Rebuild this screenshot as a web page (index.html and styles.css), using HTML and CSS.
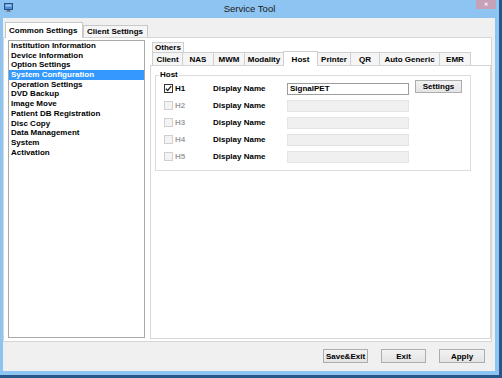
FILE: index.html
```html
<!DOCTYPE html>
<html lang="en">
<head>
    <meta charset="UTF-8">
    <title>Service Tool</title>
    <link rel="stylesheet" href="styles.css">
</head>
<body>
    <div class="window">
        <div class="titlebar">
            <svg class="app-icon" width="9" height="9" viewBox="0 0 9 9">
                <rect x="0.5" y="0.5" width="8" height="6" fill="#4f8fd8" stroke="#2b4f80"/>
                <rect x="1.5" y="1.5" width="6" height="2" fill="#9cc8f2"/>
                <rect x="3" y="7" width="3" height="1" fill="#5a6b80"/>
                <rect x="2" y="8" width="5" height="1" fill="#7b8a9c"/>
            </svg>
            <div class="title">Service Tool</div>
            <div class="close">&#x2715;</div>
        </div>

        <div class="client">
            <div class="main-tabs">
                <div class="main-tab active">Common Settings</div>
                <div class="main-tab">Client Settings</div>
            </div>

            <div class="main-page">
                <ul class="menu">
                    <li>Institution Information</li>
                    <li>Device Information</li>
                    <li>Option Settings</li>
                    <li class="selected">System Configuration</li>
                    <li>Operation Settings</li>
                    <li>DVD Backup</li>
                    <li>Image Move</li>
                    <li>Patient DB Registration</li>
                    <li>Disc Copy</li>
                    <li>Data Management</li>
                    <li>System</li>
                    <li>Activation</li>
                </ul>

                <div class="sub">
                    <div class="sub-tabs top-row">
                        <div class="sub-tab t-others">Others</div>
                    </div>
                    <div class="sub-tabs">
                        <div class="sub-tab t-client">Client</div>
                        <div class="sub-tab t-nas">NAS</div>
                        <div class="sub-tab t-mwm">MWM</div>
                        <div class="sub-tab t-modality">Modality</div>
                        <div class="sub-tab t-host active">Host</div>
                        <div class="sub-tab t-printer">Printer</div>
                        <div class="sub-tab t-qr">QR</div>
                        <div class="sub-tab t-auto">Auto Generic</div>
                        <div class="sub-tab t-emr">EMR</div>
                    </div>

                    <div class="sub-page">
                        <fieldset class="group">
                            <legend>Host</legend>

                            <div class="host-row">
                                <span class="check checked">
                                    <svg width="7" height="7" viewBox="0 0 7 7"><path d="M0.8 3.6 L2.7 5.5 L6.2 1.2" fill="none" stroke="#222" stroke-width="1.3"/></svg>
                                </span>
                                <span class="hlabel">H1</span>
                                <span class="dname">Display Name</span>
                                <span class="field">SignalPET</span>
                                <button class="btn settings-btn">Settings</button>
                            </div>
                            <div class="host-row off">
                                <span class="check"></span>
                                <span class="hlabel">H2</span>
                                <span class="dname">Display Name</span>
                                <span class="field"></span>
                            </div>
                            <div class="host-row off">
                                <span class="check"></span>
                                <span class="hlabel">H3</span>
                                <span class="dname">Display Name</span>
                                <span class="field"></span>
                            </div>
                            <div class="host-row off">
                                <span class="check"></span>
                                <span class="hlabel">H4</span>
                                <span class="dname">Display Name</span>
                                <span class="field"></span>
                            </div>
                            <div class="host-row off">
                                <span class="check"></span>
                                <span class="hlabel">H5</span>
                                <span class="dname">Display Name</span>
                                <span class="field"></span>
                            </div>
                        </fieldset>
                    </div>
                </div>
            </div>

            <div class="actions">
                <button class="btn">Save&amp;Exit</button>
                <button class="btn">Exit</button>
                <button class="btn apply-btn">Apply</button>
            </div>
        </div>
    </div>
</body>
</html>
```

FILE: styles.css
```css
* {
    box-sizing: border-box;
}

body {
    margin: 0;
    font-family: "Liberation Sans", Arial, sans-serif;
    font-size: 8px;
    font-weight: bold;
    color: #000;
}

.window {
    width: 502px;
    height: 378px;
    background: #8ec4f1;
    border-right: 3px solid #27578a;
    border-bottom: 3px solid #27578a;
    display: flex;
    flex-direction: column;
}

/* title bar */
.titlebar {
    height: 18px;
    display: grid;
    grid-template-columns: 1fr auto 1fr;
    align-items: start;
}

.app-icon {
    margin: 3px 0 0 4px;
}

.title {
    font-size: 9.5px;
    font-weight: normal;
    line-height: 18px;
    color: #1a1a1a;
}

.close {
    justify-self: end;
    width: 20px;
    height: 9px;
    margin-right: 3px;
    background: #c7a1b8;
    color: #fff;
    font-size: 5px;
    line-height: 9px;
    text-align: center;
}

/* client area */
.client {
    flex: 1;
    margin: 0 4px 4px 3px;
    padding: 4px 3px 0 0;
    background: #f0f0f0;
    display: flex;
    flex-direction: column;
}

.main-tabs {
    display: flex;
    align-items: flex-end;
    height: 15px;
    padding-left: 2px;
}

.main-tab {
    height: 12px;
    width: 65px;
    border: 1px solid #c8c8c8;
    border-bottom: none;
    background: #f5f5f5;
    line-height: 11px;
    padding-left: 3px;
    white-space: nowrap;
}

.main-tab.active {
    width: 78px;
    height: 16px;
    margin-bottom: -1px;
    line-height: 16px;
    background: #fff;
    position: relative;
    z-index: 1;
}

.main-page {
    height: 305px;
    background: #fff;
    border: 1px solid #d6d6d6;
    padding: 2px 0 3px 4px;
    display: flex;
    gap: 5px;
}

/* left menu list */
.menu {
    width: 137px;
    margin: 0;
    padding: 0;
    list-style: none;
    border: 1px solid #a9a9a9;
}

.menu li {
    height: 9.7px;
    line-height: 9.7px;
    padding-left: 2px;
    white-space: nowrap;
}

.menu li.selected {
    background: #3399ff;
    color: #fff;
}

/* inner tab control */
.sub {
    flex: 1;
    margin: 1px 0 -1px 0;
    display: flex;
    flex-direction: column;
}

.sub-tabs {
    display: flex;
    align-items: flex-end;
    padding-left: 2px;
    height: 13px;
}

.sub-tabs.top-row {
    height: 11px;
}

.sub-tab {
    height: 13px;
    margin-right: -1px;
    border: 1px solid #cfcfcf;
    border-bottom: none;
    background: #f5f5f5;
    line-height: 13px;
    text-align: center;
    white-space: nowrap;
}

.top-row .sub-tab {
    height: 10px;
    line-height: 9px;
}

.sub-tab.active {
    height: 15px;
    margin-bottom: -1px;
    background: #fff;
    line-height: 15px;
    position: relative;
    z-index: 1;
}

.t-others { width: 32px; }
.t-client { width: 31px; }
.t-nas { width: 32px; }
.t-mwm { width: 32px; }
.t-modality { width: 40px; }
.t-host { width: 35px; }
.t-printer { width: 34px; }
.t-qr { width: 30px; }
.t-auto { width: 61px; }
.t-emr { width: 32px; }

.sub-page {
    flex: 1;
    background: #fff;
    border: 1px solid #d6d6d6;
    padding: 4px 0 0 4px;
}

/* host group */
.group {
    width: 316px;
    margin: 0;
    padding: 0 0 5px 8px;
    border: 1px solid #dcdcdc;
}

.group legend {
    margin-left: -5px;
    padding: 0 1px;
    line-height: 10px;
}

.host-row {
    height: 17px;
    display: flex;
    align-items: center;
}

.check {
    width: 9px;
    height: 9px;
    margin-right: 2px;
    border: 1px solid #d0d0d0;
    background: #f4f4f4;
    display: flex;
    align-items: center;
    justify-content: center;
}

.check.checked {
    border-color: #333;
    background: #fff;
}

.hlabel {
    width: 38px;
}

.off .hlabel {
    color: #a0a0a0;
}

.dname {
    width: 74px;
}

.field {
    width: 122px;
    height: 12px;
    border: 1px solid #e4e4e4;
    background: #f0f0f0;
    padding-left: 2px;
    line-height: 10px;
}

.host-row:first-of-type .field {
    border-color: #9c9c9c;
    background: #fff;
}

.btn {
    height: 14px;
    width: 45px;
    padding: 0;
    border: 1px solid #adadad;
    background: linear-gradient(#f2f2f2, #e4e4e4);
    font-family: "Liberation Sans", Arial, sans-serif;
    font-size: 8px;
    font-weight: bold;
    color: #000;
}

.settings-btn {
    align-self: flex-start;
    width: 47px;
    height: 13px;
    margin-left: 6px;
}

/* bottom buttons */
.actions {
    display: flex;
    justify-content: flex-end;
    gap: 13px;
    padding: 7px 7px 0 0;
}

.apply-btn {
    width: 46px;
}
```
